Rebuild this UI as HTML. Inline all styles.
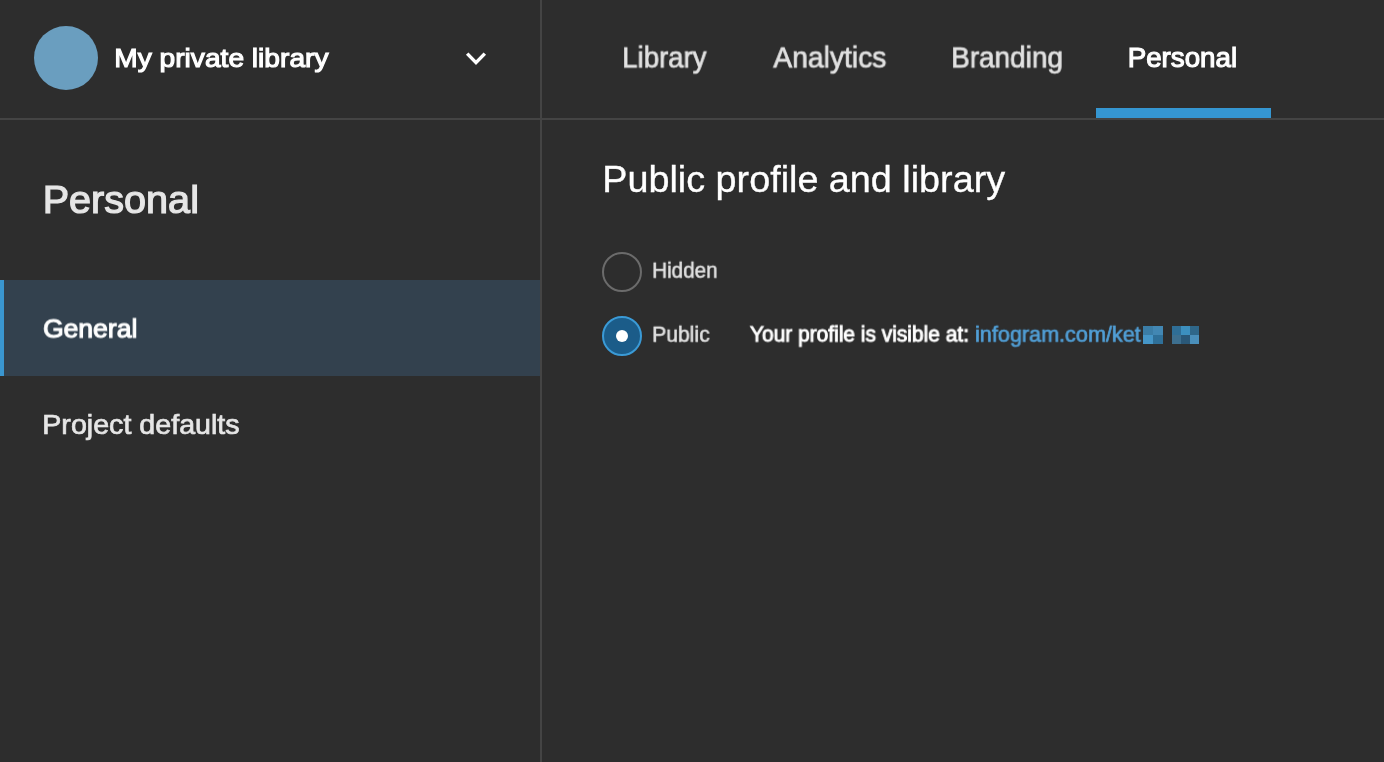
<!DOCTYPE html>
<html lang="en"><head><meta charset="utf-8"><title>Personal</title><style>
html,body{margin:0;padding:0;}
body{width:1384px;height:762px;overflow:hidden;background:#2d2d2d;position:relative;font-family:"Liberation Sans", sans-serif;}
.t{position:absolute;white-space:pre;line-height:1;transform-origin:0 0;margin:0;will-change:transform;}
.abs{position:absolute;}
</style></head>
<body>
<div class="abs" style="left:0;top:280px;width:540px;height:96px;background:#33414e"></div>
<div class="abs" style="left:0;top:280px;width:4px;height:96px;background:#3a96d0"></div>
<div class="abs" style="left:0;top:118px;width:1384px;height:2px;background:#444444"></div>
<div class="abs" style="left:540px;top:0;width:2px;height:762px;background:#444444"></div>
<div class="abs" style="left:1096px;top:108px;width:175px;height:10px;background:#3596d1"></div>
<div class="abs" style="left:34px;top:26px;width:64px;height:64px;border-radius:50%;background:#6a9ebf"></div>
<svg class="abs" style="left:462px;top:46px" width="28" height="24" viewBox="0 0 28 24"><path d="M5.2 7.6 L14 16.6 L22.8 7.6" fill="none" stroke="#ffffff" stroke-width="3.5"/></svg>
<div class="abs" style="left:602px;top:252px;width:36px;height:36px;border:2px solid #6b6b6b;border-radius:50%"></div>
<div class="abs" style="left:602px;top:316px;width:36px;height:36px;border:2px solid #3a9ad6;border-radius:50%;background:#1b5c89"></div>
<div class="abs" style="left:616px;top:330px;width:12px;height:12px;border-radius:50%;background:#ffffff"></div>
<div class="abs" style="left:1143px;top:326px;width:10px;height:9px;background:#3b7da6"></div>
<div class="abs" style="left:1153px;top:326px;width:10px;height:9px;background:#4287b3"></div>
<div class="abs" style="left:1143px;top:335px;width:10px;height:9px;background:#4596c8"></div>
<div class="abs" style="left:1153px;top:335px;width:10px;height:9px;background:#2f7099"></div>
<div class="abs" style="left:1172px;top:326px;width:9px;height:9px;background:#2f6e96"></div>
<div class="abs" style="left:1181px;top:326px;width:9px;height:9px;background:#3c8fbe"></div>
<div class="abs" style="left:1190px;top:326px;width:9px;height:9px;background:#2f6789"></div>
<div class="abs" style="left:1172px;top:335px;width:9px;height:9px;background:#3d6f8f"></div>
<div class="abs" style="left:1181px;top:335px;width:9px;height:9px;background:#2a5878"></div>
<div class="abs" style="left:1190px;top:335px;width:9px;height:9px;background:#4a8fba"></div>
<div class="t" style="left:114px;top:45px;font-size:26.5px;font-weight:400;color:#ffffff;-webkit-text-stroke:1.15px #ffffff;transform:translate(0.24px,0.37px) scaleX(1.0619)">My private library</div>
<div class="t" style="left:622px;top:43px;font-size:28.8px;font-weight:400;color:#e2e2e2;-webkit-text-stroke:0.7px #e2e2e2;transform:translate(0.14px,0.45px) scaleX(0.9591)">Library</div>
<div class="t" style="left:773px;top:43px;font-size:28.8px;font-weight:400;color:#e2e2e2;-webkit-text-stroke:0.7px #e2e2e2;transform:translate(0.28px,0.45px) scaleX(0.9819)">Analytics</div>
<div class="t" style="left:951px;top:43px;font-size:28.8px;font-weight:400;color:#e2e2e2;-webkit-text-stroke:0.7px #e2e2e2;transform:translate(0.13px,0.45px) scaleX(0.9702)">Branding</div>
<div class="t" style="left:1127px;top:45px;font-size:26.9px;font-weight:400;color:#ffffff;-webkit-text-stroke:1.1px #ffffff;transform:translate(0.67px,0.27px) scaleX(1.0314)">Personal</div>
<div class="t" style="left:42px;top:181px;font-size:38.4px;font-weight:400;color:#e6e6e6;-webkit-text-stroke:1.2px #e6e6e6;transform:translate(0.69px,0.37px) scaleX(1.0312)">Personal</div>
<div class="t" style="left:43px;top:315px;font-size:26.5px;font-weight:400;color:#ffffff;-webkit-text-stroke:1.15px #ffffff;transform:translate(0.1px,0.47px) scaleX(0.9989)">General</div>
<div class="t" style="left:42px;top:410px;font-size:27.9px;font-weight:400;color:#e6e6e6;-webkit-text-stroke:0.7px #e6e6e6;transform:translate(0.27px,0.75px) scaleX(1.0267)">Project defaults</div>
<div class="t" style="left:602px;top:160px;font-size:37.7px;font-weight:400;color:#ffffff;-webkit-text-stroke:0.35px #ffffff;transform:translate(0.3px,0.75px) scaleX(1.0015)">Public profile and library</div>
<div class="t" style="left:652px;top:259px;font-size:22.1px;font-weight:400;color:#e2e2e2;-webkit-text-stroke:0.5px #e2e2e2;transform:translate(0.17px,0.75px) scaleX(0.9333)">Hidden</div>
<div class="t" style="left:652px;top:323px;font-size:22.1px;font-weight:400;color:#e2e2e2;-webkit-text-stroke:0.5px #e2e2e2;transform:translate(0.14px,0.75px) scaleX(0.9559)">Public</div>
<div class="t" style="left:749px;top:323px;font-size:21.2px;font-weight:400;color:#ffffff;-webkit-text-stroke:0.9px #ffffff;transform:translate(0.9px,0.46px) scaleX(0.9878)">Your profile is visible at:</div>
<div class="t" style="left:975px;top:323px;font-size:21.8px;font-weight:400;color:#519fd6;-webkit-text-stroke:0.7px #519fd6;transform:translate(0.0px,0.75px) scaleX(0.9917)">infogram.com/ket</div>
</body></html>
